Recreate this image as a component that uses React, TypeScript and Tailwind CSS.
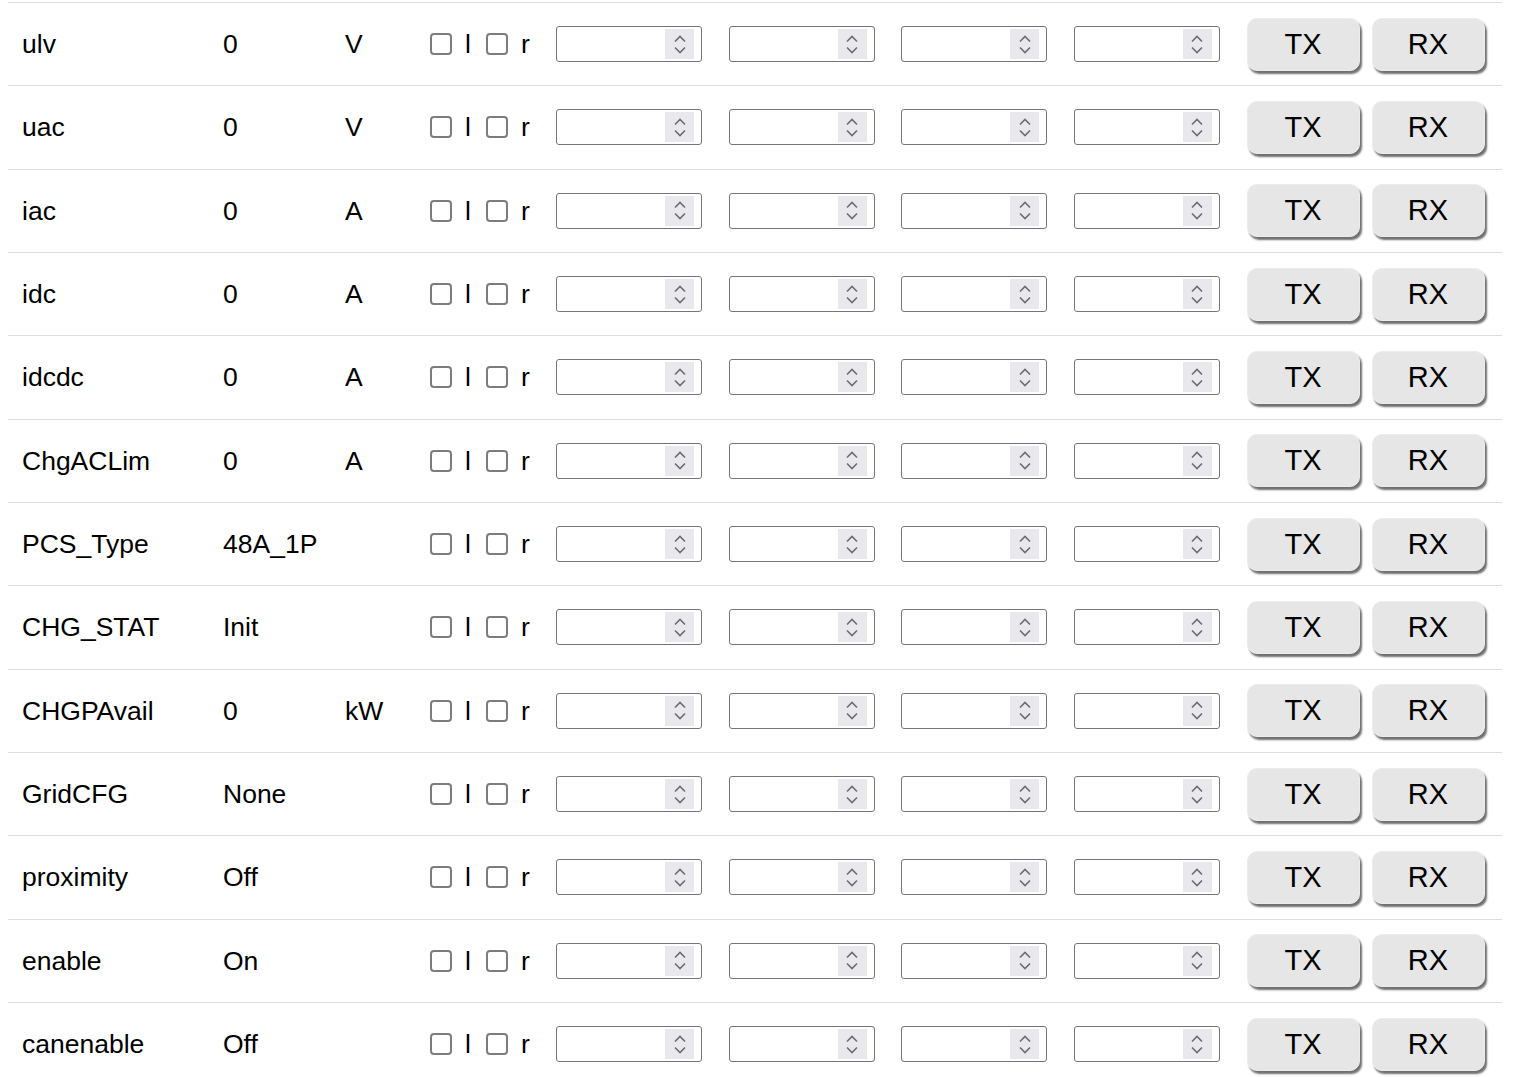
import React from "react";

const rows: [string, string, string][] = [
  ["ulv", "0", "V"],
  ["uac", "0", "V"],
  ["iac", "0", "A"],
  ["idc", "0", "A"],
  ["idcdc", "0", "A"],
  ["ChgACLim", "0", "A"],
  ["PCS_Type", "48A_1P", ""],
  ["CHG_STAT", "Init", ""],
  ["CHGPAvail", "0", "kW"],
  ["GridCFG", "None", ""],
  ["proximity", "Off", ""],
  ["enable", "On", ""],
  ["canenable", "Off", ""],
];

function Check() {
  return <div className="w-[22px] h-[22px] border-2 border-[#7d7d7d] rounded-[4px] bg-white shrink-0" />;
}

function NumInput() {
  return (
    <div className="w-[146px] h-[36px] border border-[#767676] rounded-[3px] bg-white flex items-center justify-end pr-[7px] shrink-0">
      <div className="w-[29px] h-[30px] bg-[#e9e9ed] flex flex-col items-center justify-center gap-[3px]">
        <svg width="14" height="9" viewBox="0 0 14 9">
          <path d="M2 7.5 L7 2.5 L12 7.5" fill="none" stroke="#6d6d6d" strokeWidth="1.6" />
        </svg>
        <svg width="14" height="9" viewBox="0 0 14 9">
          <path d="M2 1.5 L7 6.5 L12 1.5" fill="none" stroke="#6d6d6d" strokeWidth="1.6" />
        </svg>
      </div>
    </div>
  );
}

function Btn({ label }: { label: string }) {
  return (
    <button className="w-[113px] h-[53px] rounded-[10px] bg-[#e6e6e6] border border-[#ececec] shadow-[2px_3px_2px_#6f6f6f] text-[29px] text-black flex items-center justify-center shrink-0 [font-family:'Liberation_Sans',Arial,sans-serif]">
      {label}
    </button>
  );
}

export default function App() {
  return (
    <div className="bg-white min-h-screen pt-[2px] [font-family:'Liberation_Sans',Arial,sans-serif] text-black">
      <div className="ml-2 w-[1494px]">
        {rows.map(([name, val, unit]) => (
          <div key={name} className="h-[83.33px] border-t border-[#dddddd] flex items-center text-[26.5px] leading-none">
            <div className="w-[215px] pl-[14px] shrink-0">{name}</div>
            <div className="w-[122px] shrink-0">{val}</div>
            <div className="w-[85px] shrink-0">{unit}</div>
            <div className="flex items-center shrink-0 w-[126px]">
              <Check />
              <span className="ml-[13px] mr-[13px] w-[8px]">l</span>
              <Check />
              <span className="ml-[13px]">r</span>
            </div>
            <div className="flex items-center gap-[26.5px]">
              <NumInput />
              <NumInput />
              <NumInput />
              <NumInput />
            </div>
            <div className="flex items-center gap-[12px] ml-[27px]">
              <Btn label="TX" />
              <Btn label="RX" />
            </div>
          </div>
        ))}
      </div>
    </div>
  );
}
